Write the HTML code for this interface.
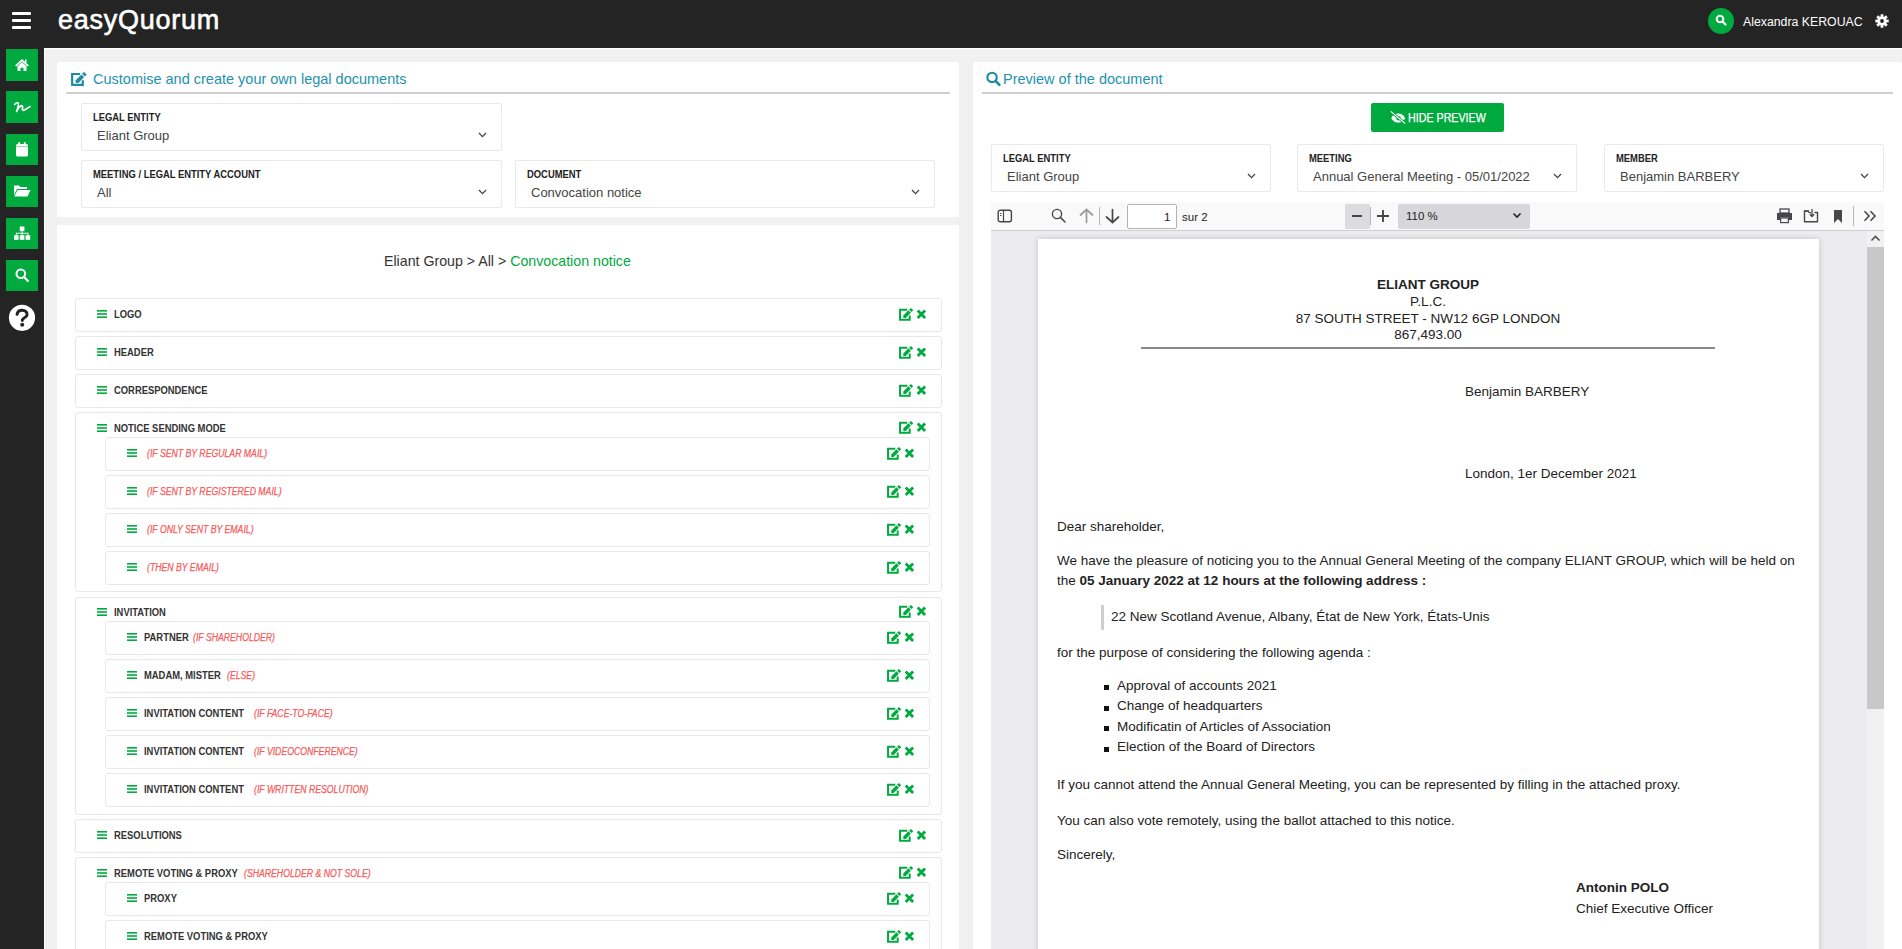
<!DOCTYPE html>
<html><head><meta charset="utf-8"><style>
*{box-sizing:border-box;margin:0;padding:0}
html,body{width:1902px;height:949px;overflow:hidden;background:#f1f1f1;font-family:"Liberation Sans",sans-serif;color:#333}
div,span,svg{position:absolute}
svg{overflow:visible}
span.in{position:static}
#hdr{left:0;top:0;width:1902px;height:48px;background:#242424}
#side{left:0;top:48px;width:44px;height:901px;background:#242424}
#content{left:44px;top:48px;width:1858px;height:901px;background:#f1f1f1;border-left:1px solid #fff;border-top:1px solid #fff}
.sbtn{left:6px;width:32px;height:32px;background:#00aa3f}
.card{background:#fff;border-radius:3px}
.title{font-size:14.5px;color:#2492ae;white-space:nowrap;line-height:1}
.tline{height:2px;background:#d0d0d0}
.field{border:1px solid #e9e9e9;border-radius:2px;background:#fff}
.lbl{left:11px;top:8.5px;font-size:10px;font-weight:bold;color:#222;white-space:nowrap;line-height:1;transform:scaleX(0.94);transform-origin:0 0}
.val{left:15px;top:25px;font-size:13px;color:#444;white-space:nowrap;line-height:1.15}
.item{border:1px solid #e8e8e8;border-radius:3px;background:#fff}
.itxt{font-size:10px;font-weight:bold;color:#333;white-space:nowrap;line-height:1;transform:scaleX(0.94);transform-origin:0 0}
.ctxt{font-size:10px;font-style:italic;color:#f65c5c;white-space:nowrap;line-height:1;-webkit-text-stroke:0.25px #f65c5c;transform:scaleX(0.87);transform-origin:0 0}
.cond{font-style:italic;font-weight:normal;color:#f65c5c;margin-left:6px}
.doc{font-size:13.5px;color:#222;white-space:nowrap;line-height:1}
</style></head><body>
<div id="hdr">
<div style="left:12px;top:12px;width:19px;height:3px;background:#fff;border-radius:1px"></div>
<div style="left:12px;top:19px;width:19px;height:3px;background:#fff;border-radius:1px"></div>
<div style="left:12px;top:26px;width:19px;height:3px;background:#fff;border-radius:1px"></div>
<div style="left:58px;top:4px;font-size:27px;color:#fff;letter-spacing:0.75px;line-height:1.2;-webkit-text-stroke:0.6px #fff">easyQuorum</div>
<div style="left:1708px;top:8px;width:26px;height:26px;border-radius:50%;background:#00aa3f"></div>
<svg style="left:1715px;top:14px" width="12" height="12" viewBox="0 0 12 12"><circle cx="5" cy="5" r="3.3" fill="none" stroke="#fff" stroke-width="2"/><line x1="7.5" y1="7.5" x2="10.5" y2="10.5" stroke="#fff" stroke-width="2.2" stroke-linecap="round"/></svg>
<div style="left:1743px;top:15.5px;font-size:12.3px;color:#fff;white-space:nowrap;line-height:1">Alexandra KEROUAC</div>
<svg style="left:1875px;top:14px" width="14" height="14" viewBox="0 0 14 14"><g fill="#fff"><circle cx="7" cy="7" r="4.6"/><rect x="5.6" y="0.3" width="2.8" height="3.4" transform="rotate(0 7 7)"/><rect x="5.6" y="0.3" width="2.8" height="3.4" transform="rotate(45 7 7)"/><rect x="5.6" y="0.3" width="2.8" height="3.4" transform="rotate(90 7 7)"/><rect x="5.6" y="0.3" width="2.8" height="3.4" transform="rotate(135 7 7)"/><rect x="5.6" y="0.3" width="2.8" height="3.4" transform="rotate(180 7 7)"/><rect x="5.6" y="0.3" width="2.8" height="3.4" transform="rotate(225 7 7)"/><rect x="5.6" y="0.3" width="2.8" height="3.4" transform="rotate(270 7 7)"/><rect x="5.6" y="0.3" width="2.8" height="3.4" transform="rotate(315 7 7)"/></g><circle cx="7" cy="7" r="1.9" fill="#222"/></svg>
</div>
<div id="side"></div>
<div id="content"></div>
<div class="sbtn" style="top:49px;height:32px"></div>
<div class="sbtn" style="top:91px;height:32px"></div>
<div class="sbtn" style="top:134px;height:31px"></div>
<div class="sbtn" style="top:176px;height:31px"></div>
<div class="sbtn" style="top:218px;height:31px"></div>
<div class="sbtn" style="top:260px;height:31px"></div>
<svg style="left:14px;top:58px" width="16" height="14" viewBox="0 0 16 14"><path d="M8 1 L1 7.5 L2.3 8.6 L8 3.4 L13.7 8.6 L15 7.5 L12.5 5.2 V1.5 H11 V3.8 Z" fill="#fff"/><path d="M3.5 8.3 L8 4.3 L12.5 8.3 V13 H9.5 V9.8 H6.5 V13 H3.5 Z" fill="#fff"/></svg>
<svg style="left:13px;top:101px" width="18" height="12" viewBox="0 0 18 12"><path d="M1.6 3.6 Q3.2 1.2 5 1.9 Q6.2 2.6 3.6 10.4 Q6.3 4.8 8.6 4.6 Q10.2 4.6 9.3 8.2 Q9.4 10 11.8 8.8 L17 5.6" fill="none" stroke="#fff" stroke-width="1.7" stroke-linecap="round" stroke-linejoin="round"/></svg>
<svg style="left:15px;top:141px" width="14" height="16" viewBox="0 0 14 16"><rect x="1" y="3" width="12" height="12.5" rx="1.5" fill="#fff"/><rect x="3.2" y="1" width="2" height="3.5" rx="1" fill="#fff"/><rect x="8.8" y="1" width="2" height="3.5" rx="1" fill="#fff"/><rect x="1" y="5.2" width="12" height="0.9" fill="#7fd49f"/></svg>
<svg style="left:13px;top:184px" width="18" height="14" viewBox="0 0 18 14"><path d="M1 1.5 H6 L7.5 3 H14 V5 H4 L1 11 Z" fill="#fff"/><path d="M4.5 6 H17.5 L14.5 12.5 H1.2 Z" fill="#fff"/></svg>
<svg style="left:13px;top:226px" width="18" height="15" viewBox="0 0 18 15"><g fill="#fff"><rect x="6.8" y="0.5" width="4.6" height="4.6"/><rect x="1" y="9.2" width="4.6" height="4.6"/><rect x="6.8" y="9.2" width="4.6" height="4.6"/><rect x="12.6" y="9.2" width="4.6" height="4.6"/><rect x="8.7" y="5" width="0.9" height="4.2"/><rect x="2.9" y="6.8" width="12.4" height="0.9"/><rect x="2.9" y="6.8" width="0.9" height="2.4"/><rect x="14.4" y="6.8" width="0.9" height="2.4"/></g></svg>
<svg style="left:15px;top:268px" width="15" height="15" viewBox="0 0 15 15"><circle cx="5.8" cy="5.8" r="4.3" fill="none" stroke="#fff" stroke-width="2"/><line x1="9" y1="9" x2="13" y2="13" stroke="#fff" stroke-width="2.2" stroke-linecap="round"/></svg>
<svg style="left:8px;top:304px" width="28" height="28" viewBox="0 0 28 28"><circle cx="14" cy="13.8" r="13.1" fill="#fff"/><path d="M9 10.4 C9.6 7.4 11.6 6.3 14.1 6.3 C17 6.3 19.1 8.1 19.1 10.4 C19.1 13.2 15.2 13.6 14.3 15.9 V16.6" fill="none" stroke="#222" stroke-width="2.9" stroke-linecap="round"/><circle cx="14.2" cy="20.7" r="2" fill="#222"/></svg>
<div class="card" style="left:57px;top:62px;width:902px;height:155px;border-radius:3px 3px 0 0"></div>
<svg style="left:70.9px;top:72.4px" width="15.4" height="15.4" viewBox="0 0 14 14"><path d="M8.3 1.8 H1.05 V11.8 H10.7 V7.4" fill="none" stroke="#1e8ba6" stroke-width="2"/><path d="M4.30 9.90 L4.30 7.50 L9.46 2.34 L11.86 4.74 L6.70 9.90 Z" fill="#1e8ba6"/><path d="M10.10 1.70 L11.86 -0.07 L14.27 2.34 L12.50 4.10 Z" fill="#1e8ba6"/></svg>
<div class="title" style="left:93px;top:72px">Customise and create your own legal documents</div>
<div class="tline" style="left:66px;top:92px;width:884px"></div>
<div class="field" style="left:81px;top:103px;width:421px;height:48px"><div class="lbl">LEGAL ENTITY</div><div class="val">Eliant Group</div></div>
<svg style="left:478px;top:132px" width="9" height="6" viewBox="0 0 9 6"><path d="M1 1 L4.5 4.6 L8 1" fill="none" stroke="#444" stroke-width="1.3"/></svg>
<div class="field" style="left:81px;top:160px;width:421px;height:48px"><div class="lbl">MEETING / LEGAL ENTITY ACCOUNT</div><div class="val">All</div></div>
<svg style="left:478px;top:189px" width="9" height="6" viewBox="0 0 9 6"><path d="M1 1 L4.5 4.6 L8 1" fill="none" stroke="#444" stroke-width="1.3"/></svg>
<div class="field" style="left:515px;top:160px;width:420px;height:48px"><div class="lbl">DOCUMENT</div><div class="val">Convocation notice</div></div>
<svg style="left:911px;top:189px" width="9" height="6" viewBox="0 0 9 6"><path d="M1 1 L4.5 4.6 L8 1" fill="none" stroke="#444" stroke-width="1.3"/></svg>
<div class="card" style="left:57px;top:225px;width:902px;height:740px;border-radius:0"></div>
<div style="left:384px;top:254px;font-size:14.2px;color:#333;white-space:nowrap;line-height:1">Eliant Group &gt; All &gt; <span class="in" style="color:#00aa3f">Convocation notice</span></div>
<div class="item" style="left:75px;top:298px;width:867px;height:34px"></div>
<svg style="left:97px;top:310px" width="10" height="8" viewBox="0 0 10 8"><g fill="#00aa3f"><rect x="0" y="0" width="10" height="1.6"/><rect x="0" y="3.2" width="10" height="1.6"/><rect x="0" y="6.4" width="10" height="1.6"/></g></svg>
<div class="itxt" style="left:113.5px;top:309.6px">LOGO</div>
<svg style="left:899px;top:308px" width="28" height="14" viewBox="0 0 28 14"><path d="M8.3 1.8 H1.05 V11.8 H10.7 V7.4" fill="none" stroke="#00aa3f" stroke-width="2"/><path d="M4.30 9.90 L4.30 7.50 L9.46 2.34 L11.86 4.74 L6.70 9.90 Z" fill="#00aa3f"/><path d="M10.10 1.70 L11.86 -0.07 L14.27 2.34 L12.50 4.10 Z" fill="#00aa3f"/><path d="M18.7 2.6 L26.1 9.9 M26.1 2.6 L18.7 9.9" stroke="#00aa3f" stroke-width="2.8"/></svg>
<div class="item" style="left:75px;top:336px;width:867px;height:34px"></div>
<svg style="left:97px;top:348px" width="10" height="8" viewBox="0 0 10 8"><g fill="#00aa3f"><rect x="0" y="0" width="10" height="1.6"/><rect x="0" y="3.2" width="10" height="1.6"/><rect x="0" y="6.4" width="10" height="1.6"/></g></svg>
<div class="itxt" style="left:113.5px;top:347.6px">HEADER</div>
<svg style="left:899px;top:346px" width="28" height="14" viewBox="0 0 28 14"><path d="M8.3 1.8 H1.05 V11.8 H10.7 V7.4" fill="none" stroke="#00aa3f" stroke-width="2"/><path d="M4.30 9.90 L4.30 7.50 L9.46 2.34 L11.86 4.74 L6.70 9.90 Z" fill="#00aa3f"/><path d="M10.10 1.70 L11.86 -0.07 L14.27 2.34 L12.50 4.10 Z" fill="#00aa3f"/><path d="M18.7 2.6 L26.1 9.9 M26.1 2.6 L18.7 9.9" stroke="#00aa3f" stroke-width="2.8"/></svg>
<div class="item" style="left:75px;top:374px;width:867px;height:34px"></div>
<svg style="left:97px;top:386px" width="10" height="8" viewBox="0 0 10 8"><g fill="#00aa3f"><rect x="0" y="0" width="10" height="1.6"/><rect x="0" y="3.2" width="10" height="1.6"/><rect x="0" y="6.4" width="10" height="1.6"/></g></svg>
<div class="itxt" style="left:113.5px;top:385.6px">CORRESPONDENCE</div>
<svg style="left:899px;top:384px" width="28" height="14" viewBox="0 0 28 14"><path d="M8.3 1.8 H1.05 V11.8 H10.7 V7.4" fill="none" stroke="#00aa3f" stroke-width="2"/><path d="M4.30 9.90 L4.30 7.50 L9.46 2.34 L11.86 4.74 L6.70 9.90 Z" fill="#00aa3f"/><path d="M10.10 1.70 L11.86 -0.07 L14.27 2.34 L12.50 4.10 Z" fill="#00aa3f"/><path d="M18.7 2.6 L26.1 9.9 M26.1 2.6 L18.7 9.9" stroke="#00aa3f" stroke-width="2.8"/></svg>
<div class="item" style="left:75px;top:412px;width:867px;height:180px"></div>
<svg style="left:97px;top:424px" width="10" height="8" viewBox="0 0 10 8"><g fill="#00aa3f"><rect x="0" y="0" width="10" height="1.6"/><rect x="0" y="3.2" width="10" height="1.6"/><rect x="0" y="6.4" width="10" height="1.6"/></g></svg>
<div class="itxt" style="left:113.5px;top:423.6px">NOTICE SENDING MODE</div>
<svg style="left:899px;top:421px" width="28" height="14" viewBox="0 0 28 14"><path d="M8.3 1.8 H1.05 V11.8 H10.7 V7.4" fill="none" stroke="#00aa3f" stroke-width="2"/><path d="M4.30 9.90 L4.30 7.50 L9.46 2.34 L11.86 4.74 L6.70 9.90 Z" fill="#00aa3f"/><path d="M10.10 1.70 L11.86 -0.07 L14.27 2.34 L12.50 4.10 Z" fill="#00aa3f"/><path d="M18.7 2.6 L26.1 9.9 M26.1 2.6 L18.7 9.9" stroke="#00aa3f" stroke-width="2.8"/></svg>
<div class="item" style="left:105px;top:437px;width:825px;height:34px"></div>
<svg style="left:127px;top:449px" width="10" height="8" viewBox="0 0 10 8"><g fill="#00aa3f"><rect x="0" y="0" width="10" height="1.6"/><rect x="0" y="3.2" width="10" height="1.6"/><rect x="0" y="6.4" width="10" height="1.6"/></g></svg>
<div class="ctxt" style="left:146.5px;top:448.6px">(IF SENT BY REGULAR MAIL)</div>
<svg style="left:887px;top:447px" width="28" height="14" viewBox="0 0 28 14"><path d="M8.3 1.8 H1.05 V11.8 H10.7 V7.4" fill="none" stroke="#00aa3f" stroke-width="2"/><path d="M4.30 9.90 L4.30 7.50 L9.46 2.34 L11.86 4.74 L6.70 9.90 Z" fill="#00aa3f"/><path d="M10.10 1.70 L11.86 -0.07 L14.27 2.34 L12.50 4.10 Z" fill="#00aa3f"/><path d="M18.7 2.6 L26.1 9.9 M26.1 2.6 L18.7 9.9" stroke="#00aa3f" stroke-width="2.8"/></svg>
<div class="item" style="left:105px;top:475px;width:825px;height:34px"></div>
<svg style="left:127px;top:487px" width="10" height="8" viewBox="0 0 10 8"><g fill="#00aa3f"><rect x="0" y="0" width="10" height="1.6"/><rect x="0" y="3.2" width="10" height="1.6"/><rect x="0" y="6.4" width="10" height="1.6"/></g></svg>
<div class="ctxt" style="left:146.5px;top:486.6px">(IF SENT BY REGISTERED MAIL)</div>
<svg style="left:887px;top:485px" width="28" height="14" viewBox="0 0 28 14"><path d="M8.3 1.8 H1.05 V11.8 H10.7 V7.4" fill="none" stroke="#00aa3f" stroke-width="2"/><path d="M4.30 9.90 L4.30 7.50 L9.46 2.34 L11.86 4.74 L6.70 9.90 Z" fill="#00aa3f"/><path d="M10.10 1.70 L11.86 -0.07 L14.27 2.34 L12.50 4.10 Z" fill="#00aa3f"/><path d="M18.7 2.6 L26.1 9.9 M26.1 2.6 L18.7 9.9" stroke="#00aa3f" stroke-width="2.8"/></svg>
<div class="item" style="left:105px;top:513px;width:825px;height:34px"></div>
<svg style="left:127px;top:525px" width="10" height="8" viewBox="0 0 10 8"><g fill="#00aa3f"><rect x="0" y="0" width="10" height="1.6"/><rect x="0" y="3.2" width="10" height="1.6"/><rect x="0" y="6.4" width="10" height="1.6"/></g></svg>
<div class="ctxt" style="left:146.5px;top:524.6px">(IF ONLY SENT BY EMAIL)</div>
<svg style="left:887px;top:523px" width="28" height="14" viewBox="0 0 28 14"><path d="M8.3 1.8 H1.05 V11.8 H10.7 V7.4" fill="none" stroke="#00aa3f" stroke-width="2"/><path d="M4.30 9.90 L4.30 7.50 L9.46 2.34 L11.86 4.74 L6.70 9.90 Z" fill="#00aa3f"/><path d="M10.10 1.70 L11.86 -0.07 L14.27 2.34 L12.50 4.10 Z" fill="#00aa3f"/><path d="M18.7 2.6 L26.1 9.9 M26.1 2.6 L18.7 9.9" stroke="#00aa3f" stroke-width="2.8"/></svg>
<div class="item" style="left:105px;top:551px;width:825px;height:34px"></div>
<svg style="left:127px;top:563px" width="10" height="8" viewBox="0 0 10 8"><g fill="#00aa3f"><rect x="0" y="0" width="10" height="1.6"/><rect x="0" y="3.2" width="10" height="1.6"/><rect x="0" y="6.4" width="10" height="1.6"/></g></svg>
<div class="ctxt" style="left:146.5px;top:562.6px">(THEN BY EMAIL)</div>
<svg style="left:887px;top:561px" width="28" height="14" viewBox="0 0 28 14"><path d="M8.3 1.8 H1.05 V11.8 H10.7 V7.4" fill="none" stroke="#00aa3f" stroke-width="2"/><path d="M4.30 9.90 L4.30 7.50 L9.46 2.34 L11.86 4.74 L6.70 9.90 Z" fill="#00aa3f"/><path d="M10.10 1.70 L11.86 -0.07 L14.27 2.34 L12.50 4.10 Z" fill="#00aa3f"/><path d="M18.7 2.6 L26.1 9.9 M26.1 2.6 L18.7 9.9" stroke="#00aa3f" stroke-width="2.8"/></svg>
<div class="item" style="left:75px;top:597px;width:867px;height:218px"></div>
<svg style="left:97px;top:608px" width="10" height="8" viewBox="0 0 10 8"><g fill="#00aa3f"><rect x="0" y="0" width="10" height="1.6"/><rect x="0" y="3.2" width="10" height="1.6"/><rect x="0" y="6.4" width="10" height="1.6"/></g></svg>
<div class="itxt" style="left:113.5px;top:607.6px">INVITATION</div>
<svg style="left:899px;top:605px" width="28" height="14" viewBox="0 0 28 14"><path d="M8.3 1.8 H1.05 V11.8 H10.7 V7.4" fill="none" stroke="#00aa3f" stroke-width="2"/><path d="M4.30 9.90 L4.30 7.50 L9.46 2.34 L11.86 4.74 L6.70 9.90 Z" fill="#00aa3f"/><path d="M10.10 1.70 L11.86 -0.07 L14.27 2.34 L12.50 4.10 Z" fill="#00aa3f"/><path d="M18.7 2.6 L26.1 9.9 M26.1 2.6 L18.7 9.9" stroke="#00aa3f" stroke-width="2.8"/></svg>
<div class="item" style="left:105px;top:621px;width:825px;height:34px"></div>
<svg style="left:127px;top:633px" width="10" height="8" viewBox="0 0 10 8"><g fill="#00aa3f"><rect x="0" y="0" width="10" height="1.6"/><rect x="0" y="3.2" width="10" height="1.6"/><rect x="0" y="6.4" width="10" height="1.6"/></g></svg>
<div class="itxt" style="left:143.5px;top:632.6px">PARTNER</div>
<div class="ctxt" style="left:192.8px;top:632.6px">(IF SHAREHOLDER)</div>
<svg style="left:887px;top:631px" width="28" height="14" viewBox="0 0 28 14"><path d="M8.3 1.8 H1.05 V11.8 H10.7 V7.4" fill="none" stroke="#00aa3f" stroke-width="2"/><path d="M4.30 9.90 L4.30 7.50 L9.46 2.34 L11.86 4.74 L6.70 9.90 Z" fill="#00aa3f"/><path d="M10.10 1.70 L11.86 -0.07 L14.27 2.34 L12.50 4.10 Z" fill="#00aa3f"/><path d="M18.7 2.6 L26.1 9.9 M26.1 2.6 L18.7 9.9" stroke="#00aa3f" stroke-width="2.8"/></svg>
<div class="item" style="left:105px;top:659px;width:825px;height:34px"></div>
<svg style="left:127px;top:671px" width="10" height="8" viewBox="0 0 10 8"><g fill="#00aa3f"><rect x="0" y="0" width="10" height="1.6"/><rect x="0" y="3.2" width="10" height="1.6"/><rect x="0" y="6.4" width="10" height="1.6"/></g></svg>
<div class="itxt" style="left:143.5px;top:670.6px">MADAM, MISTER</div>
<div class="ctxt" style="left:227.2px;top:670.6px">(ELSE)</div>
<svg style="left:887px;top:669px" width="28" height="14" viewBox="0 0 28 14"><path d="M8.3 1.8 H1.05 V11.8 H10.7 V7.4" fill="none" stroke="#00aa3f" stroke-width="2"/><path d="M4.30 9.90 L4.30 7.50 L9.46 2.34 L11.86 4.74 L6.70 9.90 Z" fill="#00aa3f"/><path d="M10.10 1.70 L11.86 -0.07 L14.27 2.34 L12.50 4.10 Z" fill="#00aa3f"/><path d="M18.7 2.6 L26.1 9.9 M26.1 2.6 L18.7 9.9" stroke="#00aa3f" stroke-width="2.8"/></svg>
<div class="item" style="left:105px;top:697px;width:825px;height:34px"></div>
<svg style="left:127px;top:709px" width="10" height="8" viewBox="0 0 10 8"><g fill="#00aa3f"><rect x="0" y="0" width="10" height="1.6"/><rect x="0" y="3.2" width="10" height="1.6"/><rect x="0" y="6.4" width="10" height="1.6"/></g></svg>
<div class="itxt" style="left:143.5px;top:708.6px">INVITATION CONTENT</div>
<div class="ctxt" style="left:253.9px;top:708.6px">(IF FACE-TO-FACE)</div>
<svg style="left:887px;top:707px" width="28" height="14" viewBox="0 0 28 14"><path d="M8.3 1.8 H1.05 V11.8 H10.7 V7.4" fill="none" stroke="#00aa3f" stroke-width="2"/><path d="M4.30 9.90 L4.30 7.50 L9.46 2.34 L11.86 4.74 L6.70 9.90 Z" fill="#00aa3f"/><path d="M10.10 1.70 L11.86 -0.07 L14.27 2.34 L12.50 4.10 Z" fill="#00aa3f"/><path d="M18.7 2.6 L26.1 9.9 M26.1 2.6 L18.7 9.9" stroke="#00aa3f" stroke-width="2.8"/></svg>
<div class="item" style="left:105px;top:735px;width:825px;height:34px"></div>
<svg style="left:127px;top:747px" width="10" height="8" viewBox="0 0 10 8"><g fill="#00aa3f"><rect x="0" y="0" width="10" height="1.6"/><rect x="0" y="3.2" width="10" height="1.6"/><rect x="0" y="6.4" width="10" height="1.6"/></g></svg>
<div class="itxt" style="left:143.5px;top:746.6px">INVITATION CONTENT</div>
<div class="ctxt" style="left:253.9px;top:746.6px">(IF VIDEOCONFERENCE)</div>
<svg style="left:887px;top:745px" width="28" height="14" viewBox="0 0 28 14"><path d="M8.3 1.8 H1.05 V11.8 H10.7 V7.4" fill="none" stroke="#00aa3f" stroke-width="2"/><path d="M4.30 9.90 L4.30 7.50 L9.46 2.34 L11.86 4.74 L6.70 9.90 Z" fill="#00aa3f"/><path d="M10.10 1.70 L11.86 -0.07 L14.27 2.34 L12.50 4.10 Z" fill="#00aa3f"/><path d="M18.7 2.6 L26.1 9.9 M26.1 2.6 L18.7 9.9" stroke="#00aa3f" stroke-width="2.8"/></svg>
<div class="item" style="left:105px;top:773px;width:825px;height:34px"></div>
<svg style="left:127px;top:785px" width="10" height="8" viewBox="0 0 10 8"><g fill="#00aa3f"><rect x="0" y="0" width="10" height="1.6"/><rect x="0" y="3.2" width="10" height="1.6"/><rect x="0" y="6.4" width="10" height="1.6"/></g></svg>
<div class="itxt" style="left:143.5px;top:784.6px">INVITATION CONTENT</div>
<div class="ctxt" style="left:253.9px;top:784.6px">(IF WRITTEN RESOLUTION)</div>
<svg style="left:887px;top:783px" width="28" height="14" viewBox="0 0 28 14"><path d="M8.3 1.8 H1.05 V11.8 H10.7 V7.4" fill="none" stroke="#00aa3f" stroke-width="2"/><path d="M4.30 9.90 L4.30 7.50 L9.46 2.34 L11.86 4.74 L6.70 9.90 Z" fill="#00aa3f"/><path d="M10.10 1.70 L11.86 -0.07 L14.27 2.34 L12.50 4.10 Z" fill="#00aa3f"/><path d="M18.7 2.6 L26.1 9.9 M26.1 2.6 L18.7 9.9" stroke="#00aa3f" stroke-width="2.8"/></svg>
<div class="item" style="left:75px;top:819px;width:867px;height:34px"></div>
<svg style="left:97px;top:831px" width="10" height="8" viewBox="0 0 10 8"><g fill="#00aa3f"><rect x="0" y="0" width="10" height="1.6"/><rect x="0" y="3.2" width="10" height="1.6"/><rect x="0" y="6.4" width="10" height="1.6"/></g></svg>
<div class="itxt" style="left:113.5px;top:830.6px">RESOLUTIONS</div>
<svg style="left:899px;top:829px" width="28" height="14" viewBox="0 0 28 14"><path d="M8.3 1.8 H1.05 V11.8 H10.7 V7.4" fill="none" stroke="#00aa3f" stroke-width="2"/><path d="M4.30 9.90 L4.30 7.50 L9.46 2.34 L11.86 4.74 L6.70 9.90 Z" fill="#00aa3f"/><path d="M10.10 1.70 L11.86 -0.07 L14.27 2.34 L12.50 4.10 Z" fill="#00aa3f"/><path d="M18.7 2.6 L26.1 9.9 M26.1 2.6 L18.7 9.9" stroke="#00aa3f" stroke-width="2.8"/></svg>
<div class="item" style="left:75px;top:857px;width:867px;height:120px"></div>
<svg style="left:97px;top:869px" width="10" height="8" viewBox="0 0 10 8"><g fill="#00aa3f"><rect x="0" y="0" width="10" height="1.6"/><rect x="0" y="3.2" width="10" height="1.6"/><rect x="0" y="6.4" width="10" height="1.6"/></g></svg>
<div class="itxt" style="left:113.5px;top:868.6px">REMOTE VOTING &amp; PROXY</div>
<div class="ctxt" style="left:243.5px;top:868.6px">(SHAREHOLDER &amp; NOT SOLE)</div>
<svg style="left:899px;top:866px" width="28" height="14" viewBox="0 0 28 14"><path d="M8.3 1.8 H1.05 V11.8 H10.7 V7.4" fill="none" stroke="#00aa3f" stroke-width="2"/><path d="M4.30 9.90 L4.30 7.50 L9.46 2.34 L11.86 4.74 L6.70 9.90 Z" fill="#00aa3f"/><path d="M10.10 1.70 L11.86 -0.07 L14.27 2.34 L12.50 4.10 Z" fill="#00aa3f"/><path d="M18.7 2.6 L26.1 9.9 M26.1 2.6 L18.7 9.9" stroke="#00aa3f" stroke-width="2.8"/></svg>
<div class="item" style="left:105px;top:882px;width:825px;height:34px"></div>
<svg style="left:127px;top:894px" width="10" height="8" viewBox="0 0 10 8"><g fill="#00aa3f"><rect x="0" y="0" width="10" height="1.6"/><rect x="0" y="3.2" width="10" height="1.6"/><rect x="0" y="6.4" width="10" height="1.6"/></g></svg>
<div class="itxt" style="left:143.5px;top:893.6px">PROXY</div>
<svg style="left:887px;top:892px" width="28" height="14" viewBox="0 0 28 14"><path d="M8.3 1.8 H1.05 V11.8 H10.7 V7.4" fill="none" stroke="#00aa3f" stroke-width="2"/><path d="M4.30 9.90 L4.30 7.50 L9.46 2.34 L11.86 4.74 L6.70 9.90 Z" fill="#00aa3f"/><path d="M10.10 1.70 L11.86 -0.07 L14.27 2.34 L12.50 4.10 Z" fill="#00aa3f"/><path d="M18.7 2.6 L26.1 9.9 M26.1 2.6 L18.7 9.9" stroke="#00aa3f" stroke-width="2.8"/></svg>
<div class="item" style="left:105px;top:920px;width:825px;height:34px"></div>
<svg style="left:127px;top:932px" width="10" height="8" viewBox="0 0 10 8"><g fill="#00aa3f"><rect x="0" y="0" width="10" height="1.6"/><rect x="0" y="3.2" width="10" height="1.6"/><rect x="0" y="6.4" width="10" height="1.6"/></g></svg>
<div class="itxt" style="left:143.5px;top:931.6px">REMOTE VOTING &amp; PROXY</div>
<svg style="left:887px;top:930px" width="28" height="14" viewBox="0 0 28 14"><path d="M8.3 1.8 H1.05 V11.8 H10.7 V7.4" fill="none" stroke="#00aa3f" stroke-width="2"/><path d="M4.30 9.90 L4.30 7.50 L9.46 2.34 L11.86 4.74 L6.70 9.90 Z" fill="#00aa3f"/><path d="M10.10 1.70 L11.86 -0.07 L14.27 2.34 L12.50 4.10 Z" fill="#00aa3f"/><path d="M18.7 2.6 L26.1 9.9 M26.1 2.6 L18.7 9.9" stroke="#00aa3f" stroke-width="2.8"/></svg>
<div class="card" style="left:973px;top:62px;width:929px;height:900px"></div>
<svg style="left:986px;top:71px" width="16" height="16" viewBox="0 0 16 16"><circle cx="6.05" cy="6.4" r="4.7" fill="none" stroke="#1e8ba6" stroke-width="2.1"/><line x1="9.5" y1="9.9" x2="13.4" y2="13.8" stroke="#1e8ba6" stroke-width="2.7" stroke-linecap="round"/></svg>
<div class="title" style="left:1003px;top:72px">Preview of the document</div>
<div class="tline" style="left:982px;top:92px;width:911px"></div>
<div style="left:1371px;top:103px;width:133px;height:29px;background:#00aa3f;border-radius:2px"></div>
<svg style="left:1390px;top:111px" width="16" height="13" viewBox="0 0 16 13"><path d="M1.2 7.2 C3.2 3.6 5.8 2.6 8.2 2.6 C10.6 2.6 13.2 3.6 15.2 7.2 C13.2 10.6 10.6 11.6 8.2 11.6 C5.8 11.6 3.2 10.6 1.2 7.2 Z" fill="#fff"/><circle cx="8.4" cy="7.1" r="2.3" fill="#00aa3f"/><circle cx="8.6" cy="6.6" r="1.2" fill="#fff"/><line x1="0.8" y1="0.4" x2="15.2" y2="12.6" stroke="#00aa3f" stroke-width="2.6"/><line x1="0.8" y1="0.4" x2="15.2" y2="12.6" stroke="#fff" stroke-width="1.2"/></svg>
<div style="left:1408px;top:112px;font-size:12.5px;color:#fff;white-space:nowrap;line-height:1;transform:scaleX(0.855);transform-origin:0 0;-webkit-text-stroke:0.25px #fff">HIDE PREVIEW</div>
<div class="field" style="left:991px;top:144px;width:280px;height:48px"><div class="lbl">LEGAL ENTITY</div><div class="val">Eliant Group</div></div>
<svg style="left:1247px;top:173px" width="9" height="6" viewBox="0 0 9 6"><path d="M1 1 L4.5 4.6 L8 1" fill="none" stroke="#444" stroke-width="1.3"/></svg>
<div class="field" style="left:1297px;top:144px;width:280px;height:48px"><div class="lbl">MEETING</div><div class="val">Annual General Meeting - 05/01/2022</div></div>
<svg style="left:1553px;top:173px" width="9" height="6" viewBox="0 0 9 6"><path d="M1 1 L4.5 4.6 L8 1" fill="none" stroke="#444" stroke-width="1.3"/></svg>
<div class="field" style="left:1604px;top:144px;width:280px;height:48px"><div class="lbl">MEMBER</div><div class="val">Benjamin BARBERY</div></div>
<svg style="left:1860px;top:173px" width="9" height="6" viewBox="0 0 9 6"><path d="M1 1 L4.5 4.6 L8 1" fill="none" stroke="#444" stroke-width="1.3"/></svg>
<div style="left:991px;top:202px;width:893px;height:800px;background:#ececee"></div>
<div style="left:991px;top:202px;width:893px;height:29px;background:#f9f9fa;border-bottom:1px solid #cfcfd1"></div>
<div style="left:1038px;top:239px;width:781px;height:800px;background:#fff;box-shadow:0 0 6px rgba(0,0,0,0.18)"></div>
<div style="left:1867px;top:231px;width:17px;height:718px;background:#f1f1f1"></div>
<div style="left:1867px;top:247px;width:17px;height:462px;background:#c8c8c8"></div>
<svg style="left:1870px;top:234px" width="11" height="8" viewBox="0 0 11 8"><path d="M1.5 6.5 L5.5 2.5 L9.5 6.5" fill="none" stroke="#505050" stroke-width="1.6"/></svg>
<svg style="left:997px;top:209px" width="16" height="14" viewBox="0 0 16 14"><rect x="1.2" y="1.2" width="13.2" height="11.6" rx="2" fill="none" stroke="#474749" stroke-width="1.4"/><line x1="6.5" y1="1.2" x2="6.5" y2="12.8" stroke="#474749" stroke-width="1.2"/><rect x="3" y="4" width="1.4" height="1" fill="#474749"/><rect x="3" y="6" width="1.4" height="1" fill="#474749"/></svg>
<svg style="left:1051px;top:208px" width="16" height="16" viewBox="0 0 16 16"><circle cx="6" cy="6" r="4.6" fill="none" stroke="#474749" stroke-width="1.4"/><line x1="9.4" y1="9.4" x2="14" y2="14" stroke="#474749" stroke-width="1.5" stroke-linecap="round"/></svg>
<svg style="left:1079px;top:208px" width="15" height="16" viewBox="0 0 15 16"><path d="M1.5 7 L7.5 1.5 L13.5 7 M7.5 1.5 V14.5" fill="none" stroke="#9a9a9c" stroke-width="1.7" stroke-linecap="round"/></svg>
<div style="left:1099px;top:207px;width:1px;height:18px;background:#b8b8ba"></div>
<svg style="left:1105px;top:208px" width="15" height="16" viewBox="0 0 15 16"><path d="M1.5 9 L7.5 14.5 L13.5 9 M7.5 14.5 V1.5" fill="none" stroke="#474749" stroke-width="1.7" stroke-linecap="round"/></svg>
<div style="left:1127px;top:204px;width:50px;height:25px;background:#fff;border:1px solid #b3b3b6;border-radius:2px"></div>
<div style="left:1128.5px;top:212px;width:42px;text-align:right;font-size:11.5px;color:#222;line-height:1">1</div>
<div style="left:1182px;top:212px;font-size:11.5px;color:#222;line-height:1;white-space:nowrap">sur 2</div>
<div style="left:1345px;top:204px;width:25px;height:25px;background:#dcdcde;border-radius:2px"></div>
<div style="left:1352px;top:215px;width:10px;height:1.8px;background:#474749"></div>
<div style="left:1370px;top:207px;width:1px;height:18px;background:#b8b8ba"></div>
<svg style="left:1376px;top:209px" width="14" height="14" viewBox="0 0 14 14"><path d="M1 7 H13 M7 1 V13" stroke="#474749" stroke-width="1.9"/></svg>
<div style="left:1398px;top:204px;width:132px;height:25px;background:#d7d7db;border-radius:2px"></div>
<div style="left:1406px;top:211px;font-size:11.5px;color:#222;line-height:1;white-space:nowrap">110 %</div>
<svg style="left:1512px;top:212px" width="10" height="7" viewBox="0 0 10 7"><path d="M1.5 1.5 L5 5 L8.5 1.5" fill="none" stroke="#222" stroke-width="1.6"/></svg>
<svg style="left:1776px;top:208px" width="17" height="16" viewBox="0 0 17 16"><rect x="4" y="1" width="9" height="4" fill="none" stroke="#474749" stroke-width="1.3"/><path d="M1 5 H16 V12 H13 V9.5 H4 V12 H1 Z" fill="#474749"/><rect x="4.6" y="10" width="7.8" height="4.6" fill="none" stroke="#474749" stroke-width="1.2"/></svg>
<svg style="left:1803px;top:208px" width="16" height="16" viewBox="0 0 16 16"><path d="M6 3 H1.5 V13.8 H14.5 V4.5 H11.5" fill="none" stroke="#474749" stroke-width="1.4" stroke-linejoin="round"/><path d="M1.5 3.2 H5 L6.2 4.6 H8" fill="none" stroke="#474749" stroke-width="1.2"/><path d="M9 1 V8.5 M6.8 6.3 L9 8.5 L11.2 6.3" fill="none" stroke="#474749" stroke-width="1.3"/></svg>
<svg style="left:1833px;top:209px" width="10" height="15" viewBox="0 0 10 15"><path d="M1 1 H9 V14 L5 10 L1 14 Z" fill="#474749"/></svg>
<div style="left:1853px;top:206px;width:1px;height:20px;background:#b8b8ba"></div>
<svg style="left:1863px;top:210px" width="14" height="12" viewBox="0 0 14 12"><path d="M1.5 1.2 L6 6 L1.5 10.8 M7.5 1.2 L12 6 L7.5 10.8" fill="none" stroke="#474749" stroke-width="1.6"/></svg>
<div class="doc" style="top:277.57px;font-size:13.5px;font-weight:bold;left:1028px;width:800px;text-align:center;">ELIANT GROUP</div>
<div class="doc" style="top:294.87px;font-size:13.5px;left:1028px;width:800px;text-align:center;">P.L.C.</div>
<div class="doc" style="top:311.97px;font-size:13.5px;left:1028px;width:800px;text-align:center;">87 SOUTH STREET - NW12 6GP LONDON</div>
<div class="doc" style="top:328.17px;font-size:13.5px;left:1028px;width:800px;text-align:center;">867,493.00</div>
<div style="left:1141px;top:347px;width:574px;height:2px;background:#8a8a8a"></div>
<div class="doc" style="top:385.37px;font-size:13.5px;left:1465px;">Benjamin BARBERY</div>
<div class="doc" style="top:466.57px;font-size:13.5px;left:1465px;">London, 1er December 2021</div>
<div class="doc" style="top:519.67px;font-size:13.5px;left:1057px;">Dear shareholder,</div>
<div class="doc" style="top:553.67px;font-size:13.5px;left:1057px;">We have the pleasure of noticing you to the Annual General Meeting of the company ELIANT GROUP, which will be held on</div>
<div class="doc" style="top:574.07px;font-size:13.5px;left:1057px;">the <b>05 January 2022 at 12 hours at the following address :</b></div>
<div style="left:1101px;top:605px;width:3px;height:25px;background:#cfcfcf"></div>
<div class="doc" style="top:610.47px;font-size:13.5px;left:1111px;">22 New Scotland Avenue, Albany, État de New York, États-Unis</div>
<div class="doc" style="top:646.27px;font-size:13.5px;left:1057px;">for the purpose of considering the following agenda :</div>
<div style="left:1104px;top:685.2px;width:5px;height:5px;background:#111"></div>
<div class="doc" style="top:678.97px;font-size:13.5px;left:1117px;">Approval of accounts 2021</div>
<div style="left:1104px;top:705.6px;width:5px;height:5px;background:#111"></div>
<div class="doc" style="top:699.42px;font-size:13.5px;left:1117px;">Change of headquarters</div>
<div style="left:1104px;top:726.1px;width:5px;height:5px;background:#111"></div>
<div class="doc" style="top:719.87px;font-size:13.5px;left:1117px;">Modificatin of Articles of Association</div>
<div style="left:1104px;top:746.5px;width:5px;height:5px;background:#111"></div>
<div class="doc" style="top:740.32px;font-size:13.5px;left:1117px;">Election of the Board of Directors</div>
<div class="doc" style="top:777.77px;font-size:13.5px;left:1057px;">If you cannot attend the Annual General Meeting, you can be represented by filling in the attached proxy.</div>
<div class="doc" style="top:813.57px;font-size:13.5px;left:1057px;">You can also vote remotely, using the ballot attached to this notice.</div>
<div class="doc" style="top:847.97px;font-size:13.5px;left:1057px;">Sincerely,</div>
<div class="doc" style="top:881.37px;font-size:13.5px;font-weight:bold;left:1576px;">Antonin POLO</div>
<div class="doc" style="top:902.37px;font-size:13.5px;left:1576px;">Chief Executive Officer</div>
</body></html>
